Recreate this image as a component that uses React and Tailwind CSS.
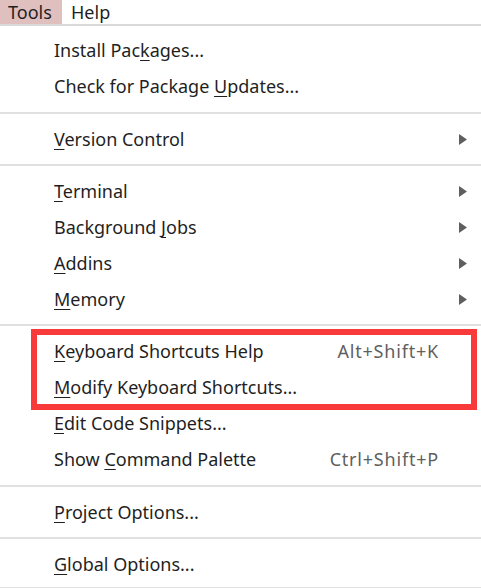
import React from "react";

const Item = ({ pre = "", u, post = "", shortcut, submenu }) => (
  <div className="flex items-center h-9 pl-[54px] pr-[14px]">
    <span className="flex-1 whitespace-nowrap">
      {pre}
      <span className="underline underline-offset-[3px] decoration-1">{u}</span>
      {post}
    </span>
    {shortcut && (
      <span className="text-[#5f5f5f] whitespace-nowrap tracking-[0.8px]">{shortcut}</span>
    )}
    <span className="w-[28px] flex justify-end">
      {submenu && (
        <svg width="8" height="11" viewBox="0 0 8 11">
          <path d="M0 0 L8 5.5 L0 11 Z" fill="#5f5f5f" />
        </svg>
      )}
    </span>
  </div>
);

const Sep = ({ h = "h-[16px]" }) => (
  <div className={`${h} flex items-center`}>
    <div className="w-full h-[2px] bg-[#e0e0e0]" />
  </div>
);

export default function App() {
  return (
    <div
      className="w-[481px] h-[588px] bg-white text-[#1f1f1f] text-[18px] leading-none overflow-hidden"
      style={{ fontFamily: '"Noto Sans", "Open Sans", sans-serif' }}
    >
      <div className="flex h-[24px] items-stretch">
        <div className="w-[62px] bg-[#e0bfbf] flex items-center pl-[8px]">Tools</div>
        <div className="flex items-center pl-[9px]">Help</div>
      </div>
      <div className="h-[2px] bg-[#dadada]" />
      <div className="h-[6px]" />
      <Item pre="Install Pac" u="k" post="ages..." />
      <Item pre="Check for Package " u="U" post="pdates..." />
      <Sep h="h-[17px]" />
      <Item u="V" post="ersion Control" submenu />
      <Sep h="h-[16px]" />
      <Item u="T" post="erminal" submenu />
      <Item pre="Background " u="J" post="obs" submenu />
      <Item u="A" post="ddins" submenu />
      <Item u="M" post="emory" submenu />
      <Sep h="h-[16px]" />
      <div className="relative">
        <Item u="K" post="eyboard Shortcuts Help" shortcut="Alt+Shift+K" />
        <Item u="M" post="odify Keyboard Shortcuts..." />
        <div className="absolute left-[31px] right-[4px] top-[-4px] bottom-[-5px] border-[6px] border-[#f93a3a]" />
      </div>
      <Item u="E" post="dit Code Snippets..." />
      <Item pre="Show " u="C" post="ommand Palette" shortcut="Ctrl+Shift+P" />
      <Sep h="h-[17px]" />
      <Item u="P" post="roject Options..." />
      <Sep h="h-[16px]" />
      <Item u="G" post="lobal Options..." />
      <div className="h-[5px]" />
      <div className="h-[2px] bg-[#e0e0e0]" />
    </div>
  );
}
